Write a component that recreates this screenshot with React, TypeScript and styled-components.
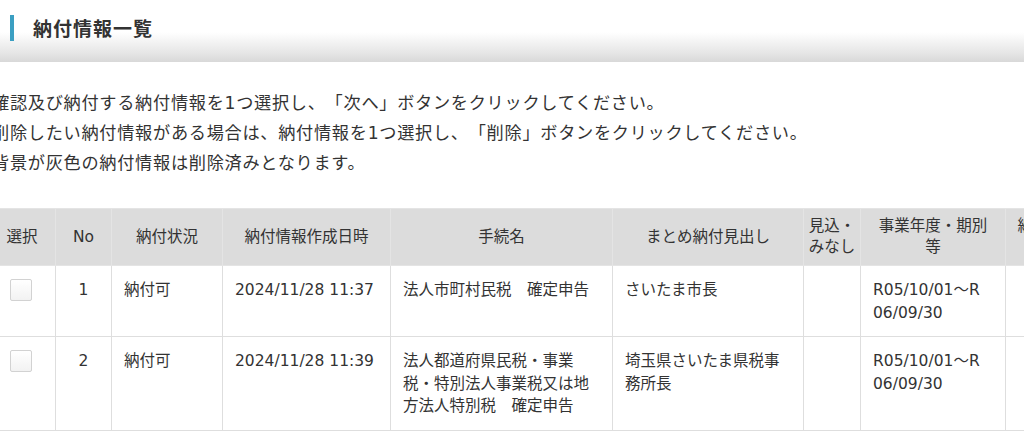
import styled, { createGlobalStyle } from 'styled-components';

const GlobalStyle = createGlobalStyle`
  html, body {
    margin: 0;
    padding: 0;
    background: #fff;
    overflow: hidden;
  }

  body {
    font-family: "DejaVu Sans", "Noto Sans CJK JP", sans-serif;
    color: #333;
    text-spacing-trim: space-all;
  }
`;

interface Column {
  label: string;
  width: number;
}

interface Payment {
  no: number;
  status: string;
  createdAt: string;
  procedure: string;
  heading: string;
  estimate: string;
  period: string[];
}

const columns: Column[] = [
  { label: '選択', width: 67 },
  { label: 'No', width: 56 },
  { label: '納付状況', width: 111 },
  { label: '納付情報作成日時', width: 168 },
  { label: '手続名', width: 222 },
  { label: 'まとめ納付見出し', width: 191 },
  { label: '見込・\nみなし', width: 57 },
  { label: '事業年度・期別\n等', width: 145 },
  { label: '納付金額\n等', width: 86 },
];

const payments: Payment[] = [
  {
    no: 1,
    status: '納付可',
    createdAt: '2024/11/28 11:37',
    procedure: '法人市町村民税　確定申告',
    heading: 'さいたま市長',
    estimate: '',
    period: ['R05/10/01～R', '06/09/30'],
  },
  {
    no: 2,
    status: '納付可',
    createdAt: '2024/11/28 11:39',
    procedure: '法人都道府県民税・事業税・特別法人事業税又は地方法人特別税　確定申告',
    heading: '埼玉県さいたま県税事務所長',
    estimate: '',
    period: ['R05/10/01～R', '06/09/30'],
  },
];

const Page = styled.div`
  width: 1024px;
  min-height: 441px;
`;

const TitleBar = styled.header`
  height: 62px;
  box-sizing: border-box;
  padding: 15px 0 0 10px;

  display: flex;
  align-items: flex-start;

  background: linear-gradient(to bottom, #fff 0%, #fff 52%, #e6e6e6 85%, #d8d8d8 100%);
`;

const TitleMark = styled.span`
  width: 4px;
  height: 26px;
  background-color: #3b9fc2;
`;

const Title = styled.h1`
  margin: 0 0 0 19px;

  font-family: "Noto Sans CJK JP", sans-serif;
  font-size: 19px;
  line-height: 26px;
  font-weight: 700;
  letter-spacing: 1px;
  color: #333;
`;

const Content = styled.main`
  margin-left: -12px;
  padding-top: 26px;
`;

const Notes = styled.div`
  padding-left: 4px;
  margin-bottom: 30px;
`;

const Note = styled.p`
  margin: 0;

  font-size: 17.2px;
  line-height: 30px;
  letter-spacing: 0.7px;
  white-space: nowrap;
  color: #333;
`;

const Table = styled.table`
  width: ${columns.reduce((sum, c) => sum + c.width, 0)}px;
  table-layout: fixed;
  border-collapse: collapse;

  font-size: 15.5px;
  color: #333;
`;

const HeadCell = styled.th`
  padding: 7px 2px;
  border: 1px solid #e4e4e4;

  background-color: #dcdcdc;

  font-weight: 400;
  line-height: 21px;
  text-align: center;
  vertical-align: middle;
  white-space: pre;
`;

const Cell = styled.td<{ $align?: 'left' | 'center' }>`
  padding: 13px 12px 12px;
  border: 1px solid #dedede;

  line-height: 22.5px;
  text-align: ${({ $align }) => $align ?? 'left'};
  vertical-align: top;
`;

const CheckCell = styled.td`
  padding: 13px 0 0;
  border: 1px solid #dedede;

  vertical-align: top;
  text-align: center;
`;

const CheckBox = styled.span`
  display: inline-block;
  width: 22px;
  height: 22px;
  box-sizing: border-box;
  margin-right: 2px;

  border: 1px solid #d2d2d2;
  border-radius: 2px;
  background: linear-gradient(to bottom, #fff, #f2f2f2);
`;

const App = (): React.ReactElement => (
  <Page>
    <GlobalStyle />
    <TitleBar>
      <TitleMark />
      <Title>納付情報一覧</Title>
    </TitleBar>
    <Content>
      <Notes>
        <Note>確認及び納付する納付情報を1つ選択し、「次へ」ボタンをクリックしてください。</Note>
        <Note>削除したい納付情報がある場合は、納付情報を1つ選択し、「削除」ボタンをクリックしてください。</Note>
        <Note>背景が灰色の納付情報は削除済みとなります。</Note>
      </Notes>
      <Table>
        <colgroup>
          {columns.map((c) => (
            <col key={c.label} style={{ width: c.width }} />
          ))}
        </colgroup>
        <thead>
          <tr>
            {columns.map((c) => (
              <HeadCell key={c.label}>{c.label}</HeadCell>
            ))}
          </tr>
        </thead>
        <tbody>
          {payments.map((p) => (
            <tr key={p.no}>
              <CheckCell>
                <CheckBox />
              </CheckCell>
              <Cell $align='center'>{p.no}</Cell>
              <Cell>{p.status}</Cell>
              <Cell>{p.createdAt}</Cell>
              <Cell>{p.procedure}</Cell>
              <Cell>{p.heading}</Cell>
              <Cell>{p.estimate}</Cell>
              <Cell>
                {p.period[0]}
                <br />
                {p.period[1]}
              </Cell>
              <Cell />
            </tr>
          ))}
        </tbody>
      </Table>
    </Content>
  </Page>
);

export default App;
